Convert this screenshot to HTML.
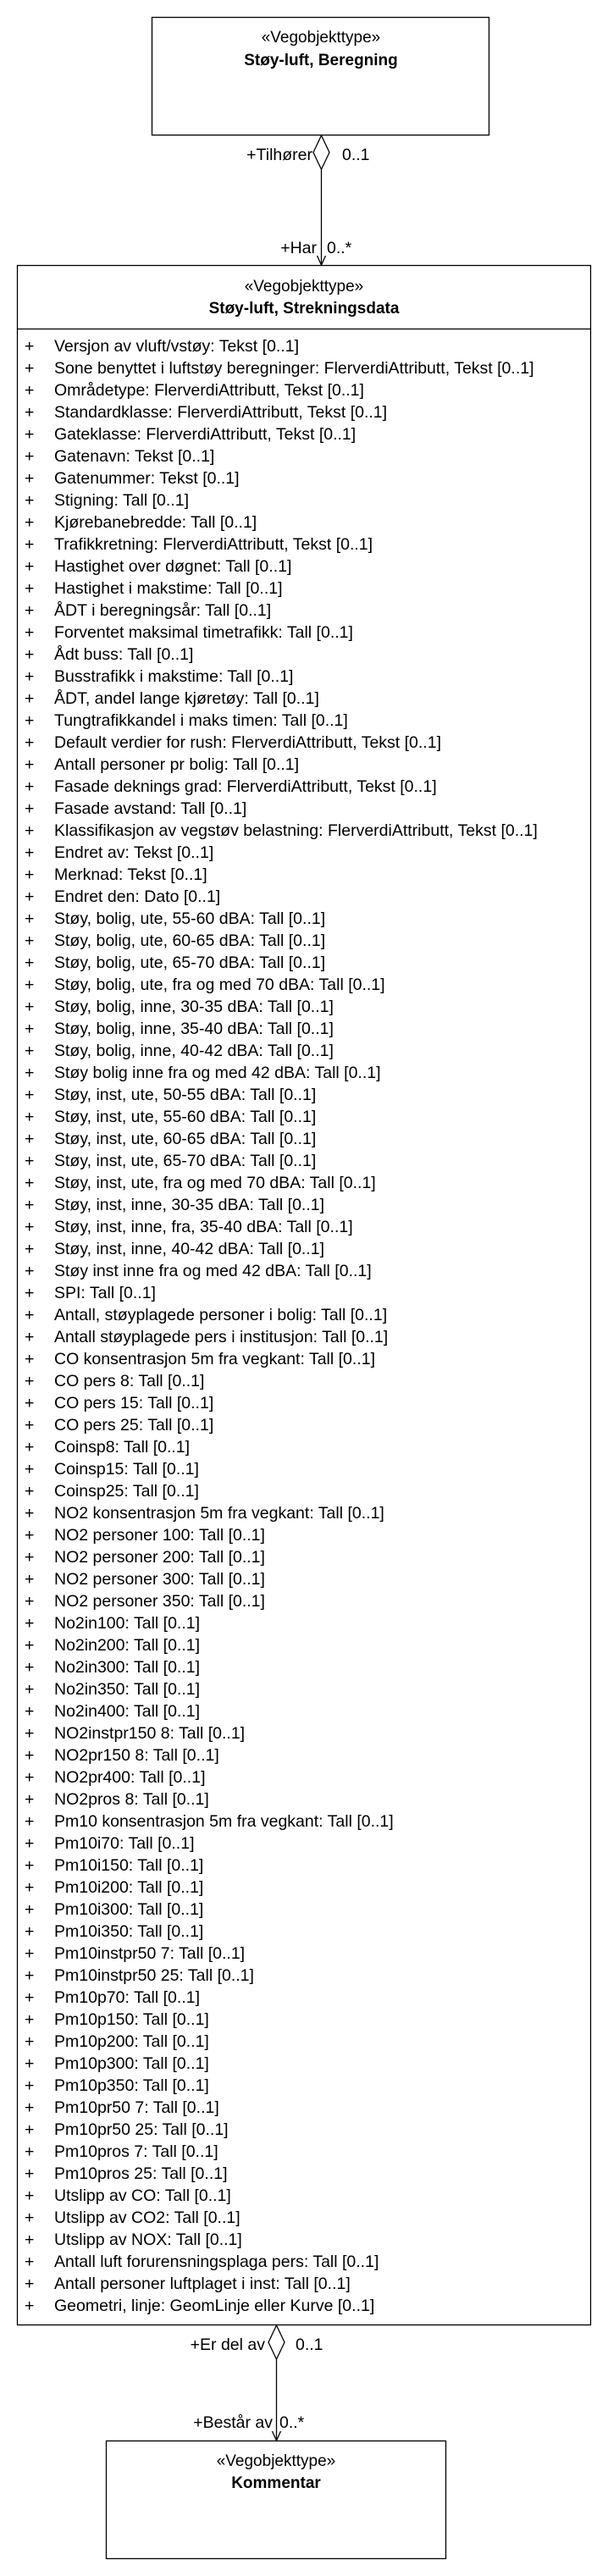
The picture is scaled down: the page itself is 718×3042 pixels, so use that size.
<!DOCTYPE html>
<html><head><meta charset="utf-8"><style>
html,body{margin:0;padding:0;background:#fff;}
body{width:718px;height:3042px;position:relative;overflow:hidden;font-family:"Liberation Sans",sans-serif;color:#000;}
.t{position:absolute;white-space:nowrap;font-size:19px;line-height:26px;text-align:center;}
.b{font-weight:bold;}
.rows{position:absolute;left:0;top:396px;}
.r{position:absolute;height:26px;line-height:26px;font-size:19.5px;white-space:nowrap;}
.p{position:absolute;left:29px;}
.x{position:absolute;left:64px;}
.lbl{position:absolute;font-size:19.5px;line-height:26px;white-space:nowrap;}
</style></head><body>
<svg width="718" height="3042" style="position:absolute;left:0;top:0">
<g fill="#fff" stroke="#000" stroke-width="1.3">
<rect x="179.5" y="20.5" width="398" height="139"/>
<rect x="20.5" y="313.5" width="677" height="2432"/>
<line x1="20.5" y1="388.5" x2="697.5" y2="388.5"/>
<rect x="125.5" y="2882.5" width="401" height="139"/>
<line x1="379.5" y1="200" x2="379.5" y2="313"/>
<polygon points="379.5,160 389,180 379.5,200 370,180"/>
<polyline points="374.5,302 379.5,313 384.5,302" fill="none"/>
<line x1="326.5" y1="2786" x2="326.5" y2="2882"/>
<polygon points="326.5,2746 336,2766 326.5,2786 317,2766"/>
<polyline points="321.5,2871 326.5,2882 331.5,2871" fill="none"/>
</g></svg>
<div class="t" style="left:179px;width:400px;top:32px">«Vegobjekttype»</div>
<div class="t b" style="left:179px;width:400px;top:59px">Støy-luft, Beregning</div>
<div class="t" style="left:20px;width:678px;top:326px">«Vegobjekttype»</div>
<div class="t b" style="left:20px;width:678px;top:352px">Støy-luft, Strekningsdata</div>
<div class="t" style="left:125px;width:402px;top:2894px">«Vegobjekttype»</div>
<div class="t b" style="left:125px;width:402px;top:2920px">Kommentar</div>
<div class="lbl" style="right:349px;top:170px">+Tilhører</div>
<div class="lbl" style="left:404px;top:170px">0..1</div>
<div class="lbl" style="right:344px;top:280px">+Har</div>
<div class="lbl" style="left:386px;top:280px">0..*</div>
<div class="lbl" style="right:405px;top:2756px">+Er del av</div>
<div class="lbl" style="left:349px;top:2756px">0..1</div>
<div class="lbl" style="right:396px;top:2848px">+Består av</div>
<div class="lbl" style="left:330px;top:2848px">0..*</div>
<div class="rows" id="rows">
<div class="r" style="top:0px"><span class="p">+</span><span class="x">Versjon av vluft/vstøy: Tekst [0..1]</span></div>
<div class="r" style="top:26px"><span class="p">+</span><span class="x">Sone benyttet i luftstøy beregninger: FlerverdiAttributt, Tekst [0..1]</span></div>
<div class="r" style="top:52px"><span class="p">+</span><span class="x">Områdetype: FlerverdiAttributt, Tekst [0..1]</span></div>
<div class="r" style="top:78px"><span class="p">+</span><span class="x">Standardklasse: FlerverdiAttributt, Tekst [0..1]</span></div>
<div class="r" style="top:104px"><span class="p">+</span><span class="x">Gateklasse: FlerverdiAttributt, Tekst [0..1]</span></div>
<div class="r" style="top:130px"><span class="p">+</span><span class="x">Gatenavn: Tekst [0..1]</span></div>
<div class="r" style="top:156px"><span class="p">+</span><span class="x">Gatenummer: Tekst [0..1]</span></div>
<div class="r" style="top:182px"><span class="p">+</span><span class="x">Stigning: Tall [0..1]</span></div>
<div class="r" style="top:208px"><span class="p">+</span><span class="x">Kjørebanebredde: Tall [0..1]</span></div>
<div class="r" style="top:234px"><span class="p">+</span><span class="x">Trafikkretning: FlerverdiAttributt, Tekst [0..1]</span></div>
<div class="r" style="top:260px"><span class="p">+</span><span class="x">Hastighet over døgnet: Tall [0..1]</span></div>
<div class="r" style="top:286px"><span class="p">+</span><span class="x">Hastighet i makstime: Tall [0..1]</span></div>
<div class="r" style="top:312px"><span class="p">+</span><span class="x">ÅDT i beregningsår: Tall [0..1]</span></div>
<div class="r" style="top:338px"><span class="p">+</span><span class="x">Forventet maksimal timetrafikk: Tall [0..1]</span></div>
<div class="r" style="top:364px"><span class="p">+</span><span class="x">Ådt buss: Tall [0..1]</span></div>
<div class="r" style="top:390px"><span class="p">+</span><span class="x">Busstrafikk i makstime: Tall [0..1]</span></div>
<div class="r" style="top:416px"><span class="p">+</span><span class="x">ÅDT, andel lange kjøretøy: Tall [0..1]</span></div>
<div class="r" style="top:442px"><span class="p">+</span><span class="x">Tungtrafikkandel i maks timen: Tall [0..1]</span></div>
<div class="r" style="top:468px"><span class="p">+</span><span class="x">Default verdier for rush: FlerverdiAttributt, Tekst [0..1]</span></div>
<div class="r" style="top:494px"><span class="p">+</span><span class="x">Antall personer pr bolig: Tall [0..1]</span></div>
<div class="r" style="top:520px"><span class="p">+</span><span class="x">Fasade deknings grad: FlerverdiAttributt, Tekst [0..1]</span></div>
<div class="r" style="top:546px"><span class="p">+</span><span class="x">Fasade avstand: Tall [0..1]</span></div>
<div class="r" style="top:572px"><span class="p">+</span><span class="x">Klassifikasjon av vegstøv belastning: FlerverdiAttributt, Tekst [0..1]</span></div>
<div class="r" style="top:598px"><span class="p">+</span><span class="x">Endret av: Tekst [0..1]</span></div>
<div class="r" style="top:624px"><span class="p">+</span><span class="x">Merknad: Tekst [0..1]</span></div>
<div class="r" style="top:650px"><span class="p">+</span><span class="x">Endret den: Dato [0..1]</span></div>
<div class="r" style="top:676px"><span class="p">+</span><span class="x">Støy, bolig, ute, 55-60 dBA: Tall [0..1]</span></div>
<div class="r" style="top:702px"><span class="p">+</span><span class="x">Støy, bolig, ute, 60-65 dBA: Tall [0..1]</span></div>
<div class="r" style="top:728px"><span class="p">+</span><span class="x">Støy, bolig, ute, 65-70 dBA: Tall [0..1]</span></div>
<div class="r" style="top:754px"><span class="p">+</span><span class="x">Støy, bolig, ute, fra og med 70 dBA: Tall [0..1]</span></div>
<div class="r" style="top:780px"><span class="p">+</span><span class="x">Støy, bolig, inne, 30-35 dBA: Tall [0..1]</span></div>
<div class="r" style="top:806px"><span class="p">+</span><span class="x">Støy, bolig, inne, 35-40 dBA: Tall [0..1]</span></div>
<div class="r" style="top:832px"><span class="p">+</span><span class="x">Støy, bolig, inne, 40-42 dBA: Tall [0..1]</span></div>
<div class="r" style="top:858px"><span class="p">+</span><span class="x">Støy bolig inne fra og med 42 dBA: Tall [0..1]</span></div>
<div class="r" style="top:884px"><span class="p">+</span><span class="x">Støy, inst, ute, 50-55 dBA: Tall [0..1]</span></div>
<div class="r" style="top:910px"><span class="p">+</span><span class="x">Støy, inst, ute, 55-60 dBA: Tall [0..1]</span></div>
<div class="r" style="top:936px"><span class="p">+</span><span class="x">Støy, inst, ute, 60-65 dBA: Tall [0..1]</span></div>
<div class="r" style="top:962px"><span class="p">+</span><span class="x">Støy, inst, ute, 65-70 dBA: Tall [0..1]</span></div>
<div class="r" style="top:988px"><span class="p">+</span><span class="x">Støy, inst, ute, fra og med 70 dBA: Tall [0..1]</span></div>
<div class="r" style="top:1014px"><span class="p">+</span><span class="x">Støy, inst, inne, 30-35 dBA: Tall [0..1]</span></div>
<div class="r" style="top:1040px"><span class="p">+</span><span class="x">Støy, inst, inne, fra, 35-40 dBA: Tall [0..1]</span></div>
<div class="r" style="top:1066px"><span class="p">+</span><span class="x">Støy, inst, inne, 40-42 dBA: Tall [0..1]</span></div>
<div class="r" style="top:1092px"><span class="p">+</span><span class="x">Støy inst inne fra og med 42 dBA: Tall [0..1]</span></div>
<div class="r" style="top:1118px"><span class="p">+</span><span class="x">SPI: Tall [0..1]</span></div>
<div class="r" style="top:1144px"><span class="p">+</span><span class="x">Antall, støyplagede personer i bolig: Tall [0..1]</span></div>
<div class="r" style="top:1170px"><span class="p">+</span><span class="x">Antall støyplagede pers i institusjon: Tall [0..1]</span></div>
<div class="r" style="top:1196px"><span class="p">+</span><span class="x">CO konsentrasjon 5m fra vegkant: Tall [0..1]</span></div>
<div class="r" style="top:1222px"><span class="p">+</span><span class="x">CO pers 8: Tall [0..1]</span></div>
<div class="r" style="top:1248px"><span class="p">+</span><span class="x">CO pers 15: Tall [0..1]</span></div>
<div class="r" style="top:1274px"><span class="p">+</span><span class="x">CO pers 25: Tall [0..1]</span></div>
<div class="r" style="top:1300px"><span class="p">+</span><span class="x">Coinsp8: Tall [0..1]</span></div>
<div class="r" style="top:1326px"><span class="p">+</span><span class="x">Coinsp15: Tall [0..1]</span></div>
<div class="r" style="top:1352px"><span class="p">+</span><span class="x">Coinsp25: Tall [0..1]</span></div>
<div class="r" style="top:1378px"><span class="p">+</span><span class="x">NO2 konsentrasjon 5m fra vegkant: Tall [0..1]</span></div>
<div class="r" style="top:1404px"><span class="p">+</span><span class="x">NO2 personer 100: Tall [0..1]</span></div>
<div class="r" style="top:1430px"><span class="p">+</span><span class="x">NO2 personer 200: Tall [0..1]</span></div>
<div class="r" style="top:1456px"><span class="p">+</span><span class="x">NO2 personer 300: Tall [0..1]</span></div>
<div class="r" style="top:1482px"><span class="p">+</span><span class="x">NO2 personer 350: Tall [0..1]</span></div>
<div class="r" style="top:1508px"><span class="p">+</span><span class="x">No2in100: Tall [0..1]</span></div>
<div class="r" style="top:1534px"><span class="p">+</span><span class="x">No2in200: Tall [0..1]</span></div>
<div class="r" style="top:1560px"><span class="p">+</span><span class="x">No2in300: Tall [0..1]</span></div>
<div class="r" style="top:1586px"><span class="p">+</span><span class="x">No2in350: Tall [0..1]</span></div>
<div class="r" style="top:1612px"><span class="p">+</span><span class="x">No2in400: Tall [0..1]</span></div>
<div class="r" style="top:1638px"><span class="p">+</span><span class="x">NO2instpr150 8: Tall [0..1]</span></div>
<div class="r" style="top:1664px"><span class="p">+</span><span class="x">NO2pr150 8: Tall [0..1]</span></div>
<div class="r" style="top:1690px"><span class="p">+</span><span class="x">NO2pr400: Tall [0..1]</span></div>
<div class="r" style="top:1716px"><span class="p">+</span><span class="x">NO2pros 8: Tall [0..1]</span></div>
<div class="r" style="top:1742px"><span class="p">+</span><span class="x">Pm10 konsentrasjon 5m fra vegkant: Tall [0..1]</span></div>
<div class="r" style="top:1768px"><span class="p">+</span><span class="x">Pm10i70: Tall [0..1]</span></div>
<div class="r" style="top:1794px"><span class="p">+</span><span class="x">Pm10i150: Tall [0..1]</span></div>
<div class="r" style="top:1820px"><span class="p">+</span><span class="x">Pm10i200: Tall [0..1]</span></div>
<div class="r" style="top:1846px"><span class="p">+</span><span class="x">Pm10i300: Tall [0..1]</span></div>
<div class="r" style="top:1872px"><span class="p">+</span><span class="x">Pm10i350: Tall [0..1]</span></div>
<div class="r" style="top:1898px"><span class="p">+</span><span class="x">Pm10instpr50 7: Tall [0..1]</span></div>
<div class="r" style="top:1924px"><span class="p">+</span><span class="x">Pm10instpr50 25: Tall [0..1]</span></div>
<div class="r" style="top:1950px"><span class="p">+</span><span class="x">Pm10p70: Tall [0..1]</span></div>
<div class="r" style="top:1976px"><span class="p">+</span><span class="x">Pm10p150: Tall [0..1]</span></div>
<div class="r" style="top:2002px"><span class="p">+</span><span class="x">Pm10p200: Tall [0..1]</span></div>
<div class="r" style="top:2028px"><span class="p">+</span><span class="x">Pm10p300: Tall [0..1]</span></div>
<div class="r" style="top:2054px"><span class="p">+</span><span class="x">Pm10p350: Tall [0..1]</span></div>
<div class="r" style="top:2080px"><span class="p">+</span><span class="x">Pm10pr50 7: Tall [0..1]</span></div>
<div class="r" style="top:2106px"><span class="p">+</span><span class="x">Pm10pr50 25: Tall [0..1]</span></div>
<div class="r" style="top:2132px"><span class="p">+</span><span class="x">Pm10pros 7: Tall [0..1]</span></div>
<div class="r" style="top:2158px"><span class="p">+</span><span class="x">Pm10pros 25: Tall [0..1]</span></div>
<div class="r" style="top:2184px"><span class="p">+</span><span class="x">Utslipp av CO: Tall [0..1]</span></div>
<div class="r" style="top:2210px"><span class="p">+</span><span class="x">Utslipp av CO2: Tall [0..1]</span></div>
<div class="r" style="top:2236px"><span class="p">+</span><span class="x">Utslipp av NOX: Tall [0..1]</span></div>
<div class="r" style="top:2262px"><span class="p">+</span><span class="x">Antall luft forurensningsplaga pers: Tall [0..1]</span></div>
<div class="r" style="top:2288px"><span class="p">+</span><span class="x">Antall personer luftplaget i inst: Tall [0..1]</span></div>
<div class="r" style="top:2314px"><span class="p">+</span><span class="x">Geometri, linje: GeomLinje eller Kurve [0..1]</span></div>
</div>
</body></html>
